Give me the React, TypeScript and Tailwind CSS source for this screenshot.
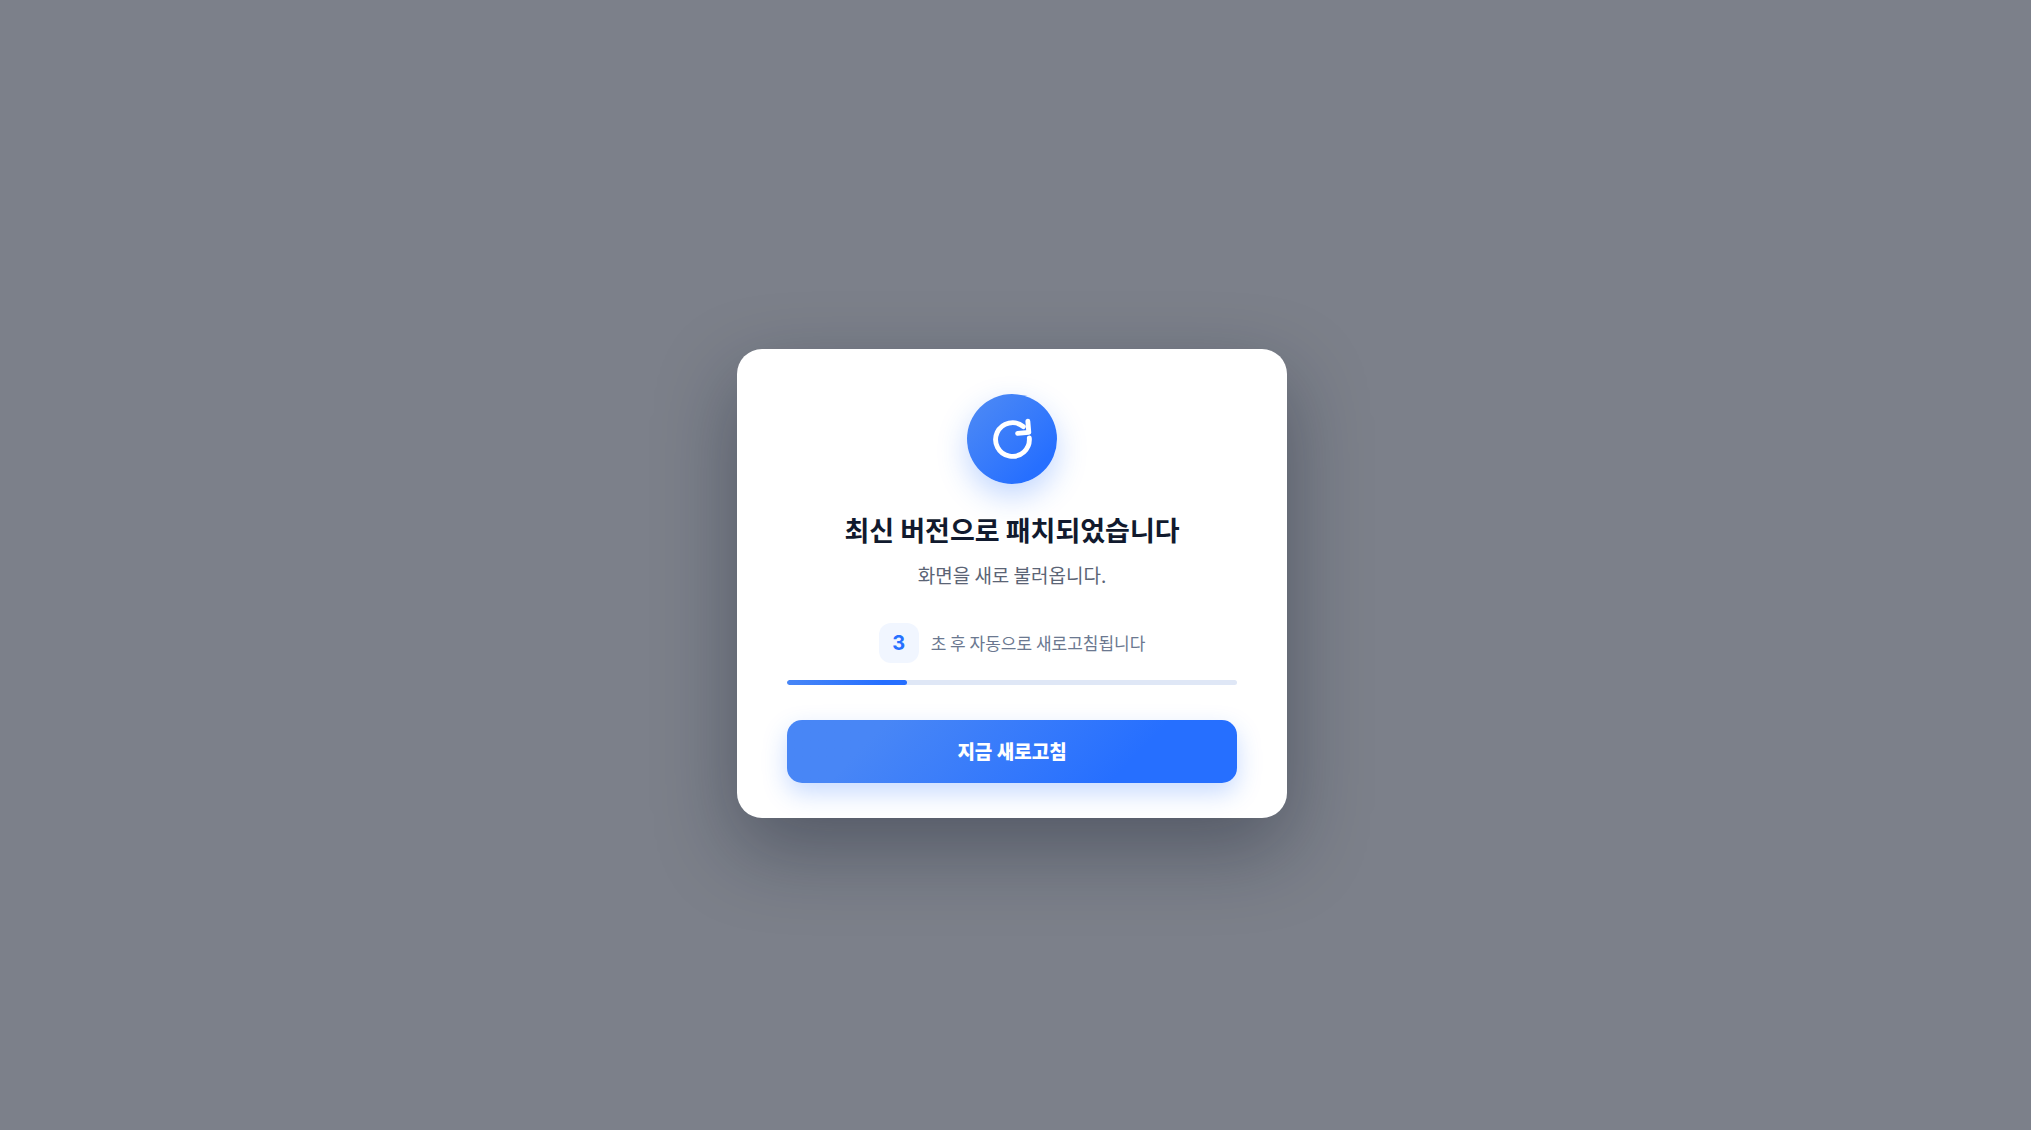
import { useEffect } from "react";

const TOTAL_SECONDS = 5;
const secondsLeft = 3;
const elapsed = 26.7; // percent of the bar already filled

function RefreshIcon() {
  return (
    <svg
      viewBox="0 0 24 24"
      className="size-[45px]"
      fill="none"
      stroke="currentColor"
      strokeWidth="2.6"
      strokeLinecap="round"
      strokeLinejoin="round"
      aria-hidden="true"
    >
      <g transform="rotate(-5 12 12)">
        <path d="M21 12a9 9 0 1 1-2.64-6.36" />
        <path d="M21 3v6h-6" />
      </g>
    </svg>
  );
}

export default function App() {
  const reload = () => window.location.reload();

  useEffect(() => {
    document.title = "최신 버전으로 패치되었습니다";
  }, []);

  return (
    <div className="flex min-h-screen items-center justify-center bg-[#7c808a] pt-[37px] pr-[7px] font-['Noto_Sans_CJK_KR',sans-serif]">
      <div
        role="dialog"
        aria-labelledby="patch-title"
        className="flex w-full max-w-[550px] flex-col items-center rounded-[25px] bg-white px-[50px] pt-[45px] pb-[35px] text-center shadow-[0_30px_80px_rgba(15,23,42,0.38)]"
      >
        {/* Icon */}
        <div className="flex size-[90px] items-center justify-center rounded-full bg-linear-135 from-[#4886f6] from-15% to-[#266fff] to-80% text-white shadow-[0_12px_30px_rgba(37,112,255,0.28)]">
          <RefreshIcon />
        </div>

        <h1
          id="patch-title"
          className="mt-[28px] text-[27px] leading-[36px] font-bold text-[#111a2e]"
        >
          최신 버전으로 패치되었습니다
        </h1>
        <p className="mt-[12px] text-[19px] leading-[30px] text-[#5b6475]">
          화면을 새로 불러옵니다.
        </p>

        {/* Countdown */}
        <div className="mt-[33px] flex items-center gap-[12px]">
          <span className="flex size-[40px] items-center justify-center rounded-[12px] bg-[#f1f6ff] font-[Inter,sans-serif] text-[20px] font-bold text-[#2670ff]">
            {secondsLeft}
          </span>
          <span className="text-[17px] text-[#6b7890]">
            초 후 자동으로 새로고침됩니다
          </span>
        </div>
        <div
          role="progressbar"
          aria-label="새로고침"
          aria-valuemin={0}
          aria-valuemax={TOTAL_SECONDS}
          aria-valuenow={TOTAL_SECONDS - secondsLeft}
          className="mt-[17px] h-[5px] w-full overflow-hidden rounded-full bg-[#dfe7f6]"
        >
          <div
            className="h-full rounded-full bg-linear-to-r from-[#4886f6] to-[#266fff] to-80%"
            style={{ width: `${elapsed}%` }}
          />
        </div>

        <button
          type="button"
          onClick={reload}
          className="mt-[35px] h-[63px] w-full cursor-pointer rounded-[15px] bg-linear-135 from-[#4886f6] from-20% to-[#266fff] to-75% text-[19px] font-extrabold text-white shadow-[0_10px_24px_rgba(37,112,255,0.25)]"
        >
          지금 새로고침
        </button>
      </div>
    </div>
  );
}
